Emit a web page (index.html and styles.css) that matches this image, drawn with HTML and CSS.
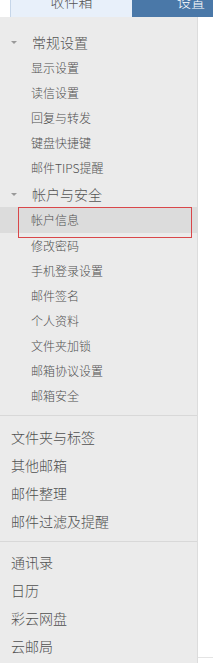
FILE: index.html
```html
<!DOCTYPE html>
<html>
<head>
<meta charset="utf-8">
<title>设置</title>
<link rel="stylesheet" href="styles.css">
</head>
<body>
<div class="tabs">
  <div class="tab tab-inbox">收件箱</div>
  <div class="tab tab-set">设置</div>
</div>
<div class="page">
<div class="side">
  <div class="group">
    <div class="group-head"><span class="arrow"></span>常规设置</div>
    <ul class="sub">
      <li>显示设置</li>
      <li>读信设置</li>
      <li>回复与转发</li>
      <li>键盘快捷键</li>
      <li>邮件TIPS提醒</li>
    </ul>
  </div>
  <div class="group">
    <div class="group-head"><span class="arrow"></span>帐户与安全</div>
    <ul class="sub">
      <li class="on">帐户信息<span class="mark"></span></li>
      <li>修改密码</li>
      <li>手机登录设置</li>
      <li>邮件签名</li>
      <li>个人资料</li>
      <li>文件夹加锁</li>
      <li>邮箱协议设置</li>
      <li>邮箱安全</li>
    </ul>
  </div>
  <ul class="links">
    <li>文件夹与标签</li>
    <li>其他邮箱</li>
    <li>邮件整理</li>
    <li>邮件过滤及提醒</li>
  </ul>
  <ul class="links">
    <li>通讯录</li>
    <li>日历</li>
    <li>彩云网盘</li>
    <li>云邮局</li>
  </ul>
</div>
<div class="main"></div>
</div>
</body>
</html>
```

FILE: styles.css
```css
body{
  margin:0;
  background:#fff;
  font-family:"Noto Sans CJK SC","Microsoft YaHei",sans-serif;
  font-weight:300;
  color:#505050;
}
ul{list-style:none;margin:0;padding:0;}

.tabs{display:flex;height:17px;overflow:hidden;padding-left:10px;}
.tab{height:31px;margin-top:-14px;line-height:30px;font-size:14px;text-align:center;flex:none;}
.tab-inbox{width:121px;background:#e8f0fa;border-left:1px solid #c6d6e9;color:#555;}
.tab-set{width:118px;background:#4a78a8;color:#fff;}

.page{display:flex;}
.side{width:197px;min-height:646px;background:#ebebeb;border-right:1px solid #dcdcdc;padding-top:12px;}
.main{flex:1;border-bottom:1px solid #e4e4e4;height:640px;}

.group{margin-bottom:1px;}
.group-head{height:26px;line-height:26px;font-size:14px;padding-left:32px;position:relative;color:#555;}
.arrow{position:absolute;left:11px;top:12px;width:0;height:0;border-left:3px solid transparent;border-right:3px solid transparent;border-top:3px solid #999;}

.sub li{height:25px;line-height:25px;font-size:12px;padding-left:31px;position:relative;}
.sub li.on{background:#dcdcdc;height:26px;line-height:26px;}
.mark{position:absolute;left:18px;top:0;width:172px;height:29px;border:1px solid #d9474a;}

.group:nth-child(2) .sub{padding-bottom:7px;border-bottom:1px solid #d8d8d8;}
.links{padding:6px 0 6px;}
.links:first-of-type{border-bottom:1px solid #d8d8d8;}
.links li{height:28px;line-height:28px;font-size:14px;padding-left:11px;}
```
